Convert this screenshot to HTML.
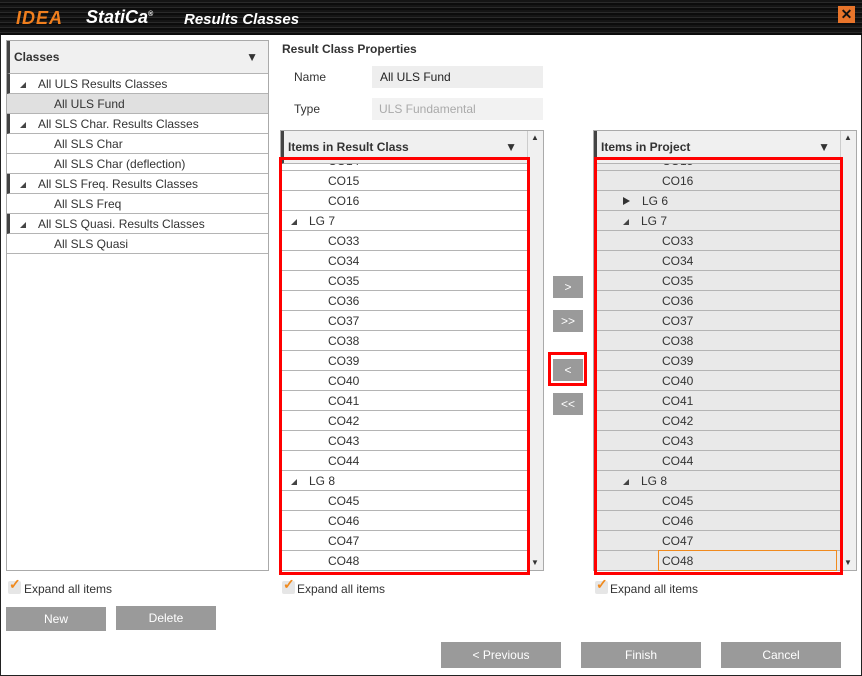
<!DOCTYPE html><html><head><style>
*{margin:0;padding:0;box-sizing:border-box}
body{width:862px;height:676px;position:relative;background:#fff;font-family:"Liberation Sans",sans-serif;font-size:12px;color:#333;overflow:hidden}
.a{position:absolute}
.win{left:0;top:0;width:862px;height:676px;border:1px solid #222}
.title{left:0;top:0;width:862px;height:35px;background:repeating-linear-gradient(180deg,#151515 0 2px,#2a2a2a 2px 3px,#0c0c0c 3px 5px)}
.btn{background:#9a9a9a;color:#fff;text-align:center;font-size:12px}
.row{position:absolute;left:0;height:20px;border-bottom:1px solid #b4b4b4;line-height:20px;white-space:nowrap}
.hdr{font-weight:bold;font-size:12px;line-height:32px;padding-left:4px;border-left:3px solid #444;background:#f0f0f0;border-bottom:1px solid #b4b4b4}
.tri{display:inline-block;width:0;height:0;border-left:6px solid transparent;border-bottom:6px solid #444;margin-right:12px}
.tri2{display:inline-block;width:0;height:0;border-top:4px solid transparent;border-bottom:4px solid transparent;border-left:7px solid #333;margin-right:12px}
.chk{width:13px;height:13px;background:#e6e6e6;border-radius:2px}
.red{border:3px solid #f00}
.sb{background:#f0f0f0;border-left:1px solid #ccc}
</style></head><body>
<div class="a win"></div>
<div class="a title"></div>
<div class="a" style="left:16px;top:8px;font:italic bold 18px 'Liberation Sans',sans-serif;color:#f07f1e;letter-spacing:1px">IDEA</div>
<div class="a" style="left:86px;top:7px;font:italic bold 18px 'Liberation Sans',sans-serif;color:#fff">StatiCa<sup style="font-size:7px">®</sup></div>
<div class="a" style="left:184px;top:11px;font:italic bold 15px 'Liberation Sans',sans-serif;color:#fff">Results Classes</div>
<div class="a" style="left:838px;top:6px;width:17px;height:17px;background:#e8742a;color:#111;font:bold 14px/17px 'Liberation Sans';text-align:center">✕</div>

<div class="a" style="left:6px;top:40px;width:263px;height:531px;border:1px solid #aaa"></div>
<div class="a hdr" style="left:7px;top:41px;width:261px;height:33px">Classes<span style="position:absolute;right:10px;top:0">▼</span></div>
<div class="a" style="left:7px;top:74px;width:261px">
<div class="row" style="top:0;width:261px;padding-left:10px;border-left:3px solid #444"><span class="tri"></span>All ULS Results Classes</div>
<div class="row" style="top:20px;width:261px;padding-left:47px;background:#e0e0e0">All ULS Fund</div>
<div class="row" style="top:40px;width:261px;padding-left:10px;border-left:3px solid #444"><span class="tri"></span>All SLS Char. Results Classes</div>
<div class="row" style="top:60px;width:261px;padding-left:47px">All SLS Char</div>
<div class="row" style="top:80px;width:261px;padding-left:47px">All SLS Char (deflection)</div>
<div class="row" style="top:100px;width:261px;padding-left:10px;border-left:3px solid #444"><span class="tri"></span>All SLS Freq. Results Classes</div>
<div class="row" style="top:120px;width:261px;padding-left:47px">All SLS Freq</div>
<div class="row" style="top:140px;width:261px;padding-left:10px;border-left:3px solid #444"><span class="tri"></span>All SLS Quasi. Results Classes</div>
<div class="row" style="top:160px;width:261px;padding-left:47px">All SLS Quasi</div>
</div>
<div class="a chk" style="left:8px;top:581px"></div><div class="a" style="left:9px;top:576px;color:#f08a1e;font-size:14px;font-weight:bold">✓</div>
<div class="a" style="left:24px;top:582px">Expand all items</div>
<div class="a btn" style="left:6px;top:607px;width:100px;height:24px;line-height:24px">New</div>
<div class="a btn" style="left:116px;top:606px;width:100px;height:24px;line-height:24px">Delete</div>

<div class="a" style="left:282px;top:42px;font-weight:bold">Result Class Properties</div>
<div class="a" style="left:294px;top:70px">Name</div>
<div class="a" style="left:372px;top:66px;width:171px;height:22px;background:#eee;padding-left:8px;line-height:22px;color:#222">All ULS Fund</div>
<div class="a" style="left:294px;top:102px">Type</div>
<div class="a" style="left:372px;top:98px;width:171px;height:22px;background:#f2f2f2;padding-left:7px;line-height:22px;color:#aaa">ULS Fundamental</div>

<div class="a" style="left:280px;top:130px;width:264px;height:441px;border:1px solid #aaa;overflow:hidden;background:#fff">
<div class="a sb" style="left:246px;top:0;width:17px;height:441px"></div>
<div class="a" style="left:250px;top:2px;font-size:8px">▲</div><div class="a" style="left:250px;top:427px;font-size:8px">▼</div>
<div class="a hdr" style="left:0;top:0;width:246px;height:33px">Items in Result Class<span style="position:absolute;right:10px;top:0">▼</span></div>
<div class="a" style="left:0;top:33px;width:246px;height:407px;overflow:hidden" id="m"></div>
</div>
<div class="a" style="left:593px;top:130px;width:264px;height:441px;border:1px solid #aaa;overflow:hidden;background:#fff">
<div class="a sb" style="left:246px;top:0;width:17px;height:441px"></div>
<div class="a" style="left:250px;top:2px;font-size:8px">▲</div><div class="a" style="left:250px;top:427px;font-size:8px">▼</div>
<div class="a hdr" style="left:0;top:0;width:246px;height:33px">Items in Project<span style="position:absolute;right:10px;top:0">▼</span></div>
<div class="a" style="left:0;top:33px;width:246px;height:407px;overflow:hidden;background:#e9e9e9" id="r"></div>
</div>
<div class="a red" style="left:279px;top:157px;width:251px;height:418px"></div>
<div class="a red" style="left:594px;top:157px;width:249px;height:418px"></div>
<div class="a" style="left:658px;top:550px;width:179px;height:21px;border:1px solid #f08a1e"></div>

<div class="a btn" style="left:553px;top:276px;width:30px;height:22px;line-height:22px">&gt;</div>
<div class="a btn" style="left:553px;top:310px;width:30px;height:22px;line-height:22px">&gt;&gt;</div>
<div class="a btn" style="left:553px;top:359px;width:30px;height:22px;line-height:22px">&lt;</div>
<div class="a red" style="left:548px;top:352px;width:39px;height:34px"></div>
<div class="a btn" style="left:553px;top:393px;width:30px;height:22px;line-height:22px">&lt;&lt;</div>

<div class="a chk" style="left:282px;top:581px"></div><div class="a" style="left:283px;top:576px;color:#f08a1e;font-size:14px;font-weight:bold">✓</div>
<div class="a" style="left:297px;top:582px">Expand all items</div>
<div class="a chk" style="left:595px;top:581px"></div><div class="a" style="left:596px;top:576px;color:#f08a1e;font-size:14px;font-weight:bold">✓</div>
<div class="a" style="left:610px;top:582px">Expand all items</div>

<div class="a btn" style="left:441px;top:642px;width:120px;height:26px;line-height:26px">&lt; Previous</div>
<div class="a btn" style="left:581px;top:642px;width:120px;height:26px;line-height:26px">Finish</div>
<div class="a btn" style="left:721px;top:642px;width:120px;height:26px;line-height:26px">Cancel</div>
<script>
function build(id,items,ci,ai){var el=document.getElementById(id),h='',y=-13;
items.forEach(function(t){var g=t[0]=='L';var arrow=t=='LG 6'?'<span class="tri2"></span>':'<span class="tri"></span>';
h+='<div class="row" style="top:'+y+'px;width:246px;padding-left:'+(g?ai:ci)+'px">'+(g?arrow:'')+t+'</div>';y+=20;});el.innerHTML=h;}
var m=['CO14','CO15','CO16','LG 7'];for(var i=33;i<=44;i++)m.push('CO'+i);m=m.concat(['LG 8','CO45','CO46','CO47','CO48']);
build('m',m,47,10);
var r=['CO15','CO16','LG 6','LG 7'];for(i=33;i<=44;i++)r.push('CO'+i);r=r.concat(['LG 8','CO45','CO46','CO47','CO48']);
build('r',r,68,29);
</script>
</body></html>
